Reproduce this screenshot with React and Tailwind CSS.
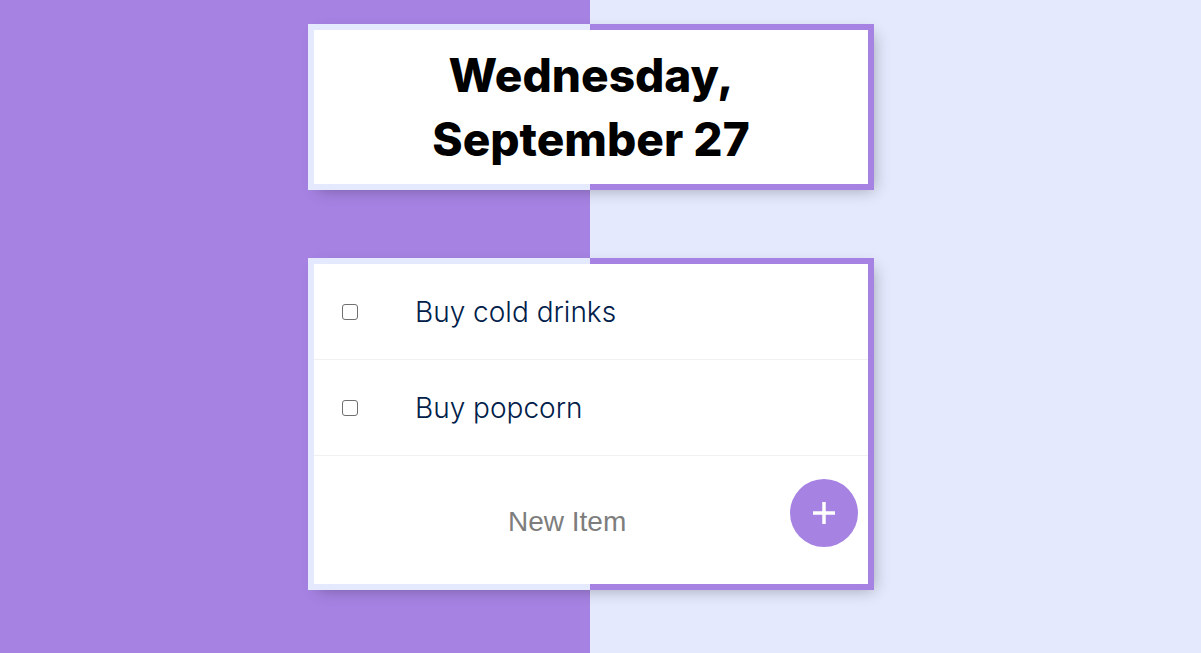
import { useState } from 'react';

const initialItems = ['Buy cold drinks', 'Buy popcorn'];

export default function App() {
    const [items, setItems] = useState(initialItems);
    const [text, setText] = useState('');

    const addItem = () => {
        if (!text.trim()) return;
        setItems([...items, text.trim()]);
        setText('');
    };

    return (
        <div className="min-h-screen bg-[linear-gradient(to_right,#a683e3_590px,#e4e9fd_590px)]">
            <div className="w-[1182px] pt-[24px] pb-[40px] flex flex-col items-center">
                {/* heading box */}
                <div className="w-[566px] p-[6px] bg-[linear-gradient(to_right,#e4e9fd_282px,#a683e3_282px)] shadow-[5px_5px_15px_-5px_rgba(0,0,0,0.3)]">
                    <div className="bg-white h-[154px] flex items-center justify-center">
                        <h1 className="font-['Inter',sans-serif] font-extrabold text-[46px] leading-[64px] text-black text-center">
                            Wednesday,
                            <br />
                            September 27
                        </h1>
                    </div>
                </div>

                {/* list box */}
                <div className="mt-[68px] w-[566px] p-[6px] bg-[linear-gradient(to_right,#e4e9fd_282px,#a683e3_282px)] shadow-[5px_5px_15px_-5px_rgba(0,0,0,0.3)]">
                    <div className="bg-white">
                        {items.map((item) => (
                            <div key={item} className="h-[96px] border-b border-[#f1f1f1] flex items-center pl-[28px]">
                                <span className="w-[16px] h-[16px] border-[1.5px] border-[#707070] rounded-[3px] bg-white shrink-0" />
                                <p className="ml-[57px] font-['Inter',sans-serif] font-light text-[28px] text-[#00204a]">
                                    {item}
                                </p>
                            </div>
                        ))}
                        <div className="h-[128px] flex items-center">
                            <input
                                value={text}
                                onChange={(e) => setText(e.target.value)}
                                placeholder="New Item"
                                className="w-[440px] pl-[194px] mt-[4px] bg-transparent outline-none font-['Liberation_Sans',Arial,sans-serif] text-[28px] text-[#333] placeholder:text-[#7d7d7d]"
                            />
                            <button
                                onClick={addItem}
                                className="ml-auto mr-[10px] mb-[14px] w-[68px] h-[68px] rounded-full bg-[#a683e3] flex items-center justify-center"
                            >
                                <svg width="24" height="24" viewBox="0 0 24 24">
                                    <path d="M12 1v22M1 12h22" stroke="white" strokeWidth="3.5" />
                                </svg>
                            </button>
                        </div>
                    </div>
                </div>
            </div>
        </div>
    );
}
